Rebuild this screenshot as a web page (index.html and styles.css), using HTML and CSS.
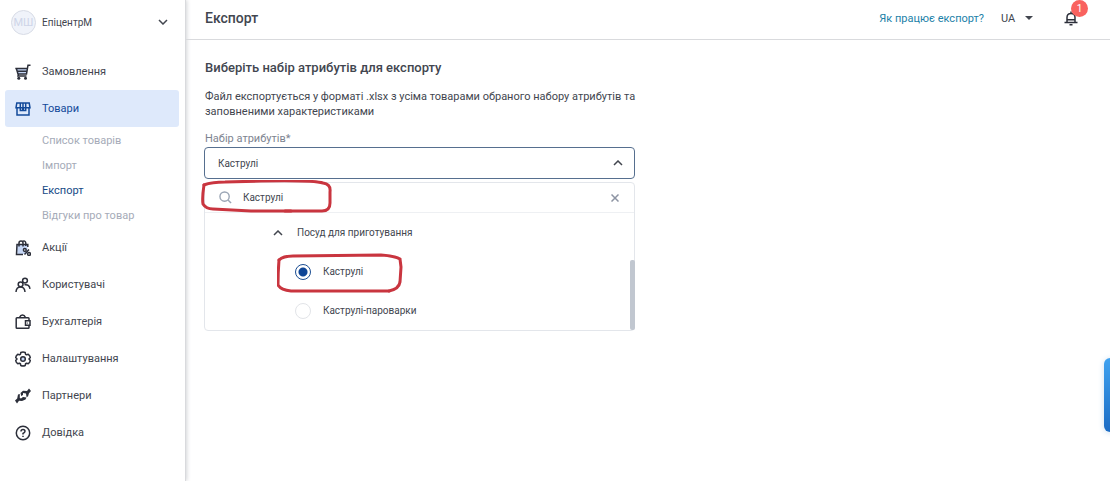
FILE: index.html
```html
<!DOCTYPE html>
<html lang="uk">
<head>
    <meta charset="UTF-8">
    <meta name="viewport" content="width=device-width, initial-scale=1.0">
    <title>Експорт</title>
    <link rel="stylesheet" href="styles.css">
</head>
<body>

<!-- Sidebar -->
<aside class="sidebar">
    <button type="button" class="account">
        <span class="avatar">МШ</span>
        <span class="account-name">ЕпіцентрМ</span>
        <svg class="chevron" viewBox="0 0 10 6"><path d="M1 1l4 4 4-4"/></svg>
    </button>

    <nav>
        <ul class="menu">
            <li>
                <a class="menu-item" href="#">
                    <svg class="icon" viewBox="0 0 16 16">
                        <path class="tint" d="M1 5h11.500l-1.300 5H3z"/>
                        <path d="M.3 4.500h11.500M1.500 5L3 10h8.500L13 1.200h2.500M2.500 7.200h9M3.500 10l-.5 2h8.500"/>
                        <circle class="solid" cx="3.800" cy="14.300" r="1.500"/>
                        <circle class="solid" cx="10.500" cy="14.300" r="1.500"/>
                    </svg>
                    Замовлення
                </a>
            </li>
            <li>
                <a class="menu-item active" href="#">
                    <svg class="icon" viewBox="0 0 16 16">
                        <path d="M1.800 2h12.400l.8 4.800H1zM2 6.800V14h12V6.800M5.300 2v7.500h2.400V7h.6v2.500h2.400V2M8 2v5"/>
                    </svg>
                    Товари
                </a>
                <ul class="submenu">
                    <li><a href="#">Список товарів</a></li>
                    <li><a href="#">Імпорт</a></li>
                    <li><a class="current" href="#">Експорт</a></li>
                    <li><a href="#">Відгуки про товар</a></li>
                </ul>
            </li>
            <li>
                <a class="menu-item" href="#">
                    <svg class="icon" viewBox="0 0 16 16">
                        <path class="tint" d="M1.500 4.500h11V14h-10z"/>
                        <path d="M12.800 7V4.500H2L1.500 14.500H8M4 6.500V3q0-2 2-2t2 2v3.500M7 1.500q3.500-1.500 3.800 1.500v3M14 9.500l-4.500 5"/>
                        <circle class="hole" cx="9.800" cy="10" r="1.400"/>
                        <circle class="hole" cx="14" cy="14" r="1.400"/>
                    </svg>
                    Акції
                </a>
            </li>
            <li>
                <a class="menu-item" href="#">
                    <svg class="icon" viewBox="0 0 16 16">
                        <path d="M1 15q.3-5 4.500-5t4.500 5M9.500 7.800q4.800-1 5.500 4"/>
                        <circle class="hole" cx="10" cy="3.600" r="2.400"/>
                        <circle class="hole" cx="5.600" cy="7.300" r="2.400"/>
                    </svg>
                    Користувачі
                </a>
            </li>
            <li>
                <a class="menu-item" href="#">
                    <svg class="icon" viewBox="0 0 16 16">
                        <path d="M14 6.500V4.500q0-.8-.8-.8H2q-.8 0-.8.800v9q0 .8.800.800h11.200q.8 0 .8-.8V12M4.500 3.500q1-2.500 3-2.500t3 2.500M15 6.800h-4.500v4.400H15z"/>
                        <circle class="solid" cx="12.500" cy="9" r=".6"/>
                    </svg>
                    Бухгалтерія
                </a>
            </li>
            <li>
                <a class="menu-item" href="#">
                    <svg class="icon" viewBox="0 0 16 16">
                        <path stroke-linejoin="round" d="M5.800 1.500q2.200-1 4.400 0l.4 1.800 1 .5 1.700-.5q1.700 1.200 2 3.200L14 8l1.300 1.500q-.3 2-2 3.200l-1.700-.5-1 .5-.4 1.800q-2.200 1-4.400 0l-.4-1.800-1-.5-1.700.5q-1.700-1.200-2-3.200L2 8 .7 6.500q.3-2 2-3.200l1.700.5 1-.5z"/>
                        <circle class="tint" cx="8" cy="8" r="2.300"/>
                        <circle cx="8" cy="8" r="2.300"/>
                    </svg>
                    Налаштування
                </a>
            </li>
            <li>
                <a class="menu-item" href="#">
                    <svg class="icon" viewBox="0 0 16 16">
                        <path class="solid" d="M0 12.500l2.200-2L3 6.500l1.800-.5v4l1.200.5L8 9l3.500.5-1 2-3.500 1.500-3-.2-2 2.700z"/>
                        <path class="solid" d="M5.500 5L8 2.800l4 .2 2-2.500 2 2.500-2 2.200-1 3.300-1.500.5-.5-3.500L8 5v2L6.200 8z"/>
                    </svg>
                    Партнери
                </a>
            </li>
            <li>
                <a class="menu-item" href="#">
                    <svg class="icon" viewBox="0 0 16 16">
                        <circle cx="8" cy="8" r="6.700"/>
                        <path d="M6 6.500Q6 4.500 8 4.500t2 1.800Q10 7.500 8 8.500v1M8 10.800v1.200"/>
                    </svg>
                    Довідка
                </a>
            </li>
        </ul>
    </nav>
</aside>

<div class="page">
    <!-- Top bar -->
    <header class="topbar">
        <h1>Експорт</h1>
        <a class="help-link" href="#">Як працює експорт?</a>
        <div class="lang">
            <select aria-label="Мова">
                <option>UA</option>
            </select>
            <svg class="caret" viewBox="0 0 8 4"><path d="M0 0h8L4 4z"/></svg>
        </div>
        <button type="button" class="bell" aria-label="Сповіщення">
            <svg class="icon" viewBox="0 0 16 16">
                <path d="M4 12V7.500q0-4 4-4t4 4V12M1.500 12.500h13M4 9.800h8M8 3.500V1.500M6.500 14.800h3"/>
            </svg>
            <span class="badge">1</span>
        </button>
    </header>

    <!-- Export form -->
    <main>
        <h2>Виберіть набір атрибутів для експорту</h2>
        <p class="hint">Файл експортується у форматі .xlsx з усіма товарами обраного набору атрибутів та заповненими характеристиками</p>

        <div class="field">
            <label for="attributeSet">Набір атрибутів*</label>
            <div class="select-box">
                <select id="attributeSet">
                    <option>Каструлі</option>
                </select>
                <svg class="chevron" viewBox="0 0 10 6"><path d="M1 5l4-4 4 4"/></svg>
            </div>

            <div class="dropdown">
                <div class="search">
                    <svg class="search-icon" viewBox="0 0 14 14"><circle cx="6" cy="6" r="5"/><path d="M9.700 9.700L13 13"/></svg>
                    <input type="text" value="Каструлі" aria-label="Пошук">
                    <button type="button" class="clear" aria-label="Очистити">
                        <svg viewBox="0 0 8 8"><path d="M.5.5l7 7M7.500.5l-7 7"/></svg>
                    </button>
                    <svg class="mark mark-search" viewBox="0 0 132 34">
                        <path d="M3 5Q10 2 24 2L60 1Q112 0 122 3Q130 4 129 12L129 23Q129 31 121 31L84 31"/>
                        <path d="M3 5Q1 18 2 24Q5 29 12 29L50 31L90 31"/>
                    </svg>
                </div>
                <div class="options">
                    <button type="button" class="group">
                        <svg class="chevron" viewBox="0 0 10 6"><path d="M1 5l4-4 4 4"/></svg>
                        Посуд для приготування
                    </button>
                    <label class="option">
                        <input type="radio" name="set" checked>
                        Каструлі
                        <svg class="mark mark-option" viewBox="0 0 126 40">
                            <path d="M2 7Q6 3 16 3L104 2Q118 3 123 6L124 14L123 29Q122 36 112 38"/>
                            <path d="M2 7Q1 20 1 32Q4 37 14 38L112 38"/>
                        </svg>
                    </label>
                    <label class="option">
                        <input type="radio" name="set">
                        Каструлі-пароварки
                    </label>
                    <span class="scroll-thumb"></span>
                </div>
            </div>
        </div>
    </main>
</div>

<button type="button" class="side-tab" aria-label="Чат"></button>

</body>
</html>
```

FILE: styles.css
```css
* {
    box-sizing: border-box;
}
body {
    margin: 0;
    min-height: 100vh;
    display: flex;
    font-family: Roboto, "Liberation Sans", sans-serif;
    font-size: 11px;
    color: #42464f;
    background-color: white;
}
button, input, select {
    font: inherit;
    color: inherit;
    background: none;
    border: none;
    padding: 0;
    margin: 0;
    outline: none;
}
button {
    cursor: pointer;
}
select {
    appearance: none;
}
ul {
    list-style: none;
    margin: 0;
    padding: 0;
}
a {
    color: inherit;
    text-decoration: none;
}
svg {
    flex: none;
    fill: none;
    stroke: currentColor;
    stroke-width: 1.5;
}

/* Sidebar */
.sidebar {
    flex: none;
    width: 186px;
    border-right: 1px solid #d9dadd;
    box-shadow: 1px 0 4px #d4d5d8;
}
.account {
    display: flex;
    align-items: center;
    gap: 6px;
    width: 100%;
    height: 44px;
    margin-bottom: 9px;
    padding: 0 17px 0 11px;
    font-size: 10px;
}
.avatar {
    width: 25px;
    height: 25px;
    border: 1px solid #d8dce6;
    border-radius: 50%;
    background-color: #f0f3fa;
    color: #ced5e8;
    font-size: 11px;
    line-height: 23px;
    text-align: center;
}
.account-name {
    flex: 1;
    text-align: left;
}
.chevron {
    width: 10px;
    height: 6px;
}
.menu {
    padding: 0 6px 0 5px;
}
.menu-item {
    display: flex;
    align-items: center;
    gap: 11px;
    height: 37px;
    padding-left: 10px;
    border-radius: 3px;
}
.icon {
    width: 16px;
    height: 16px;
}
.menu-item .icon, .bell {
    color: #2c2f3a;
}
.menu-item.active .icon {
    color: #134a9a;
}
.tint {
    fill: #c5d6f5;
    stroke: none;
}
.solid {
    fill: currentColor;
    stroke: none;
}
.hole {
    fill: white;
}
.active {
    color: #134a9a;
    background-color: #dee9fb;
}
.submenu {
    padding: 1px 0 1px 37px;
    color: #a5abb8;
    line-height: 25px;
}
.current {
    color: #164a86;
}

/* Top bar */
.page {
    flex: 1;
    min-width: 0;
}
.topbar {
    display: flex;
    align-items: center;
    height: 40px;
    padding: 0 31px 3px 19px;
    border-bottom: 1px solid #d9dadd;
}
h1, h2 {
    margin: 0;
    font-size: 13px;
    font-weight: 500;
}
h1 {
    flex: 1;
    font-size: 14px;
}
.help-link {
    color: #1c7fa8;
    margin-right: 17px;
}
.lang {
    display: flex;
    align-items: center;
    gap: 9px;
    margin-right: 30px;
}
.caret {
    width: 8px;
    height: 4px;
    fill: currentColor;
    stroke: none;
}
.bell {
    position: relative;
    height: 16px;
}
.badge {
    position: absolute;
    left: 8px;
    top: -10px;
    width: 17px;
    height: 17px;
    border-radius: 50%;
    background-color: #f9625f;
    color: white;
    font-size: 10px;
    line-height: 17px;
    text-align: center;
}

/* Export form */
main {
    padding: 20px 18px;
}
h2, .hint, .field > label {
    padding-left: 1px;
}
.hint {
    max-width: 440px;
    margin: 14px 0 12px;
    line-height: 15px;
}
.field {
    max-width: 431px;
    font-size: 10px;
}
.field > label {
    display: block;
    margin-bottom: 1px;
    color: #7d8390;
    font-size: 11px;
    line-height: 15px;
}
.select-box {
    display: flex;
    align-items: center;
    height: 32px;
    padding-right: 11px;
    border: 1px solid #566f8f;
    border-radius: 4px;
}
.select-box select {
    flex: 1;
    height: 100%;
    padding-left: 13px;
}
.dropdown {
    margin-top: 3px;
    border: 1px solid #e3e6eb;
    border-radius: 4px;
}
.search {
    position: relative;
    display: flex;
    align-items: center;
    height: 30px;
    padding: 0 15px 0 14px;
    border-bottom: 1px solid #eef0f3;
}
.search-icon {
    width: 13px;
    height: 13px;
    color: #9aa5b5;
}
.search input {
    flex: 1;
    padding-left: 11px;
}
.clear {
    display: flex;
    color: #8d94a3;
}
.clear svg {
    width: 8px;
    height: 8px;
}
.options {
    position: relative;
}
.group, .option {
    position: relative;
    display: flex;
    align-items: center;
    height: 39px;
}
.group {
    gap: 14px;
    padding-left: 68px;
}
.option {
    gap: 12px;
    padding-left: 90px;
}
.option input {
    appearance: none;
    width: 16px;
    height: 16px;
    border: 1px solid #e2e4e8;
    border-radius: 50%;
}
.option input:checked {
    border-color: #1b4d92;
    background: radial-gradient(circle, #0e4596 4px, white 5px);
}
.scroll-thumb {
    position: absolute;
    right: -1px;
    bottom: 0;
    width: 5px;
    height: 70px;
    border-radius: 2px;
    background-color: #c1c7d0;
}

/* Red pen marks */
.mark {
    position: absolute;
    color: #c9353f;
    stroke-width: 3;
    stroke-linecap: round;
    pointer-events: none;
}
.mark-search {
    left: -4px;
    top: -3px;
    width: 132px;
    height: 34px;
}
.mark-option {
    left: 72px;
    top: 1px;
    width: 126px;
    height: 40px;
}

/* Chat tab at the window edge */
.side-tab {
    position: fixed;
    right: -8px;
    top: 358px;
    width: 14px;
    height: 74px;
    border-radius: 6px;
    background: linear-gradient(#3fa2f0, #1c6cc4);
    box-shadow: 0 1px 6px #cfe0f0;
}
```
